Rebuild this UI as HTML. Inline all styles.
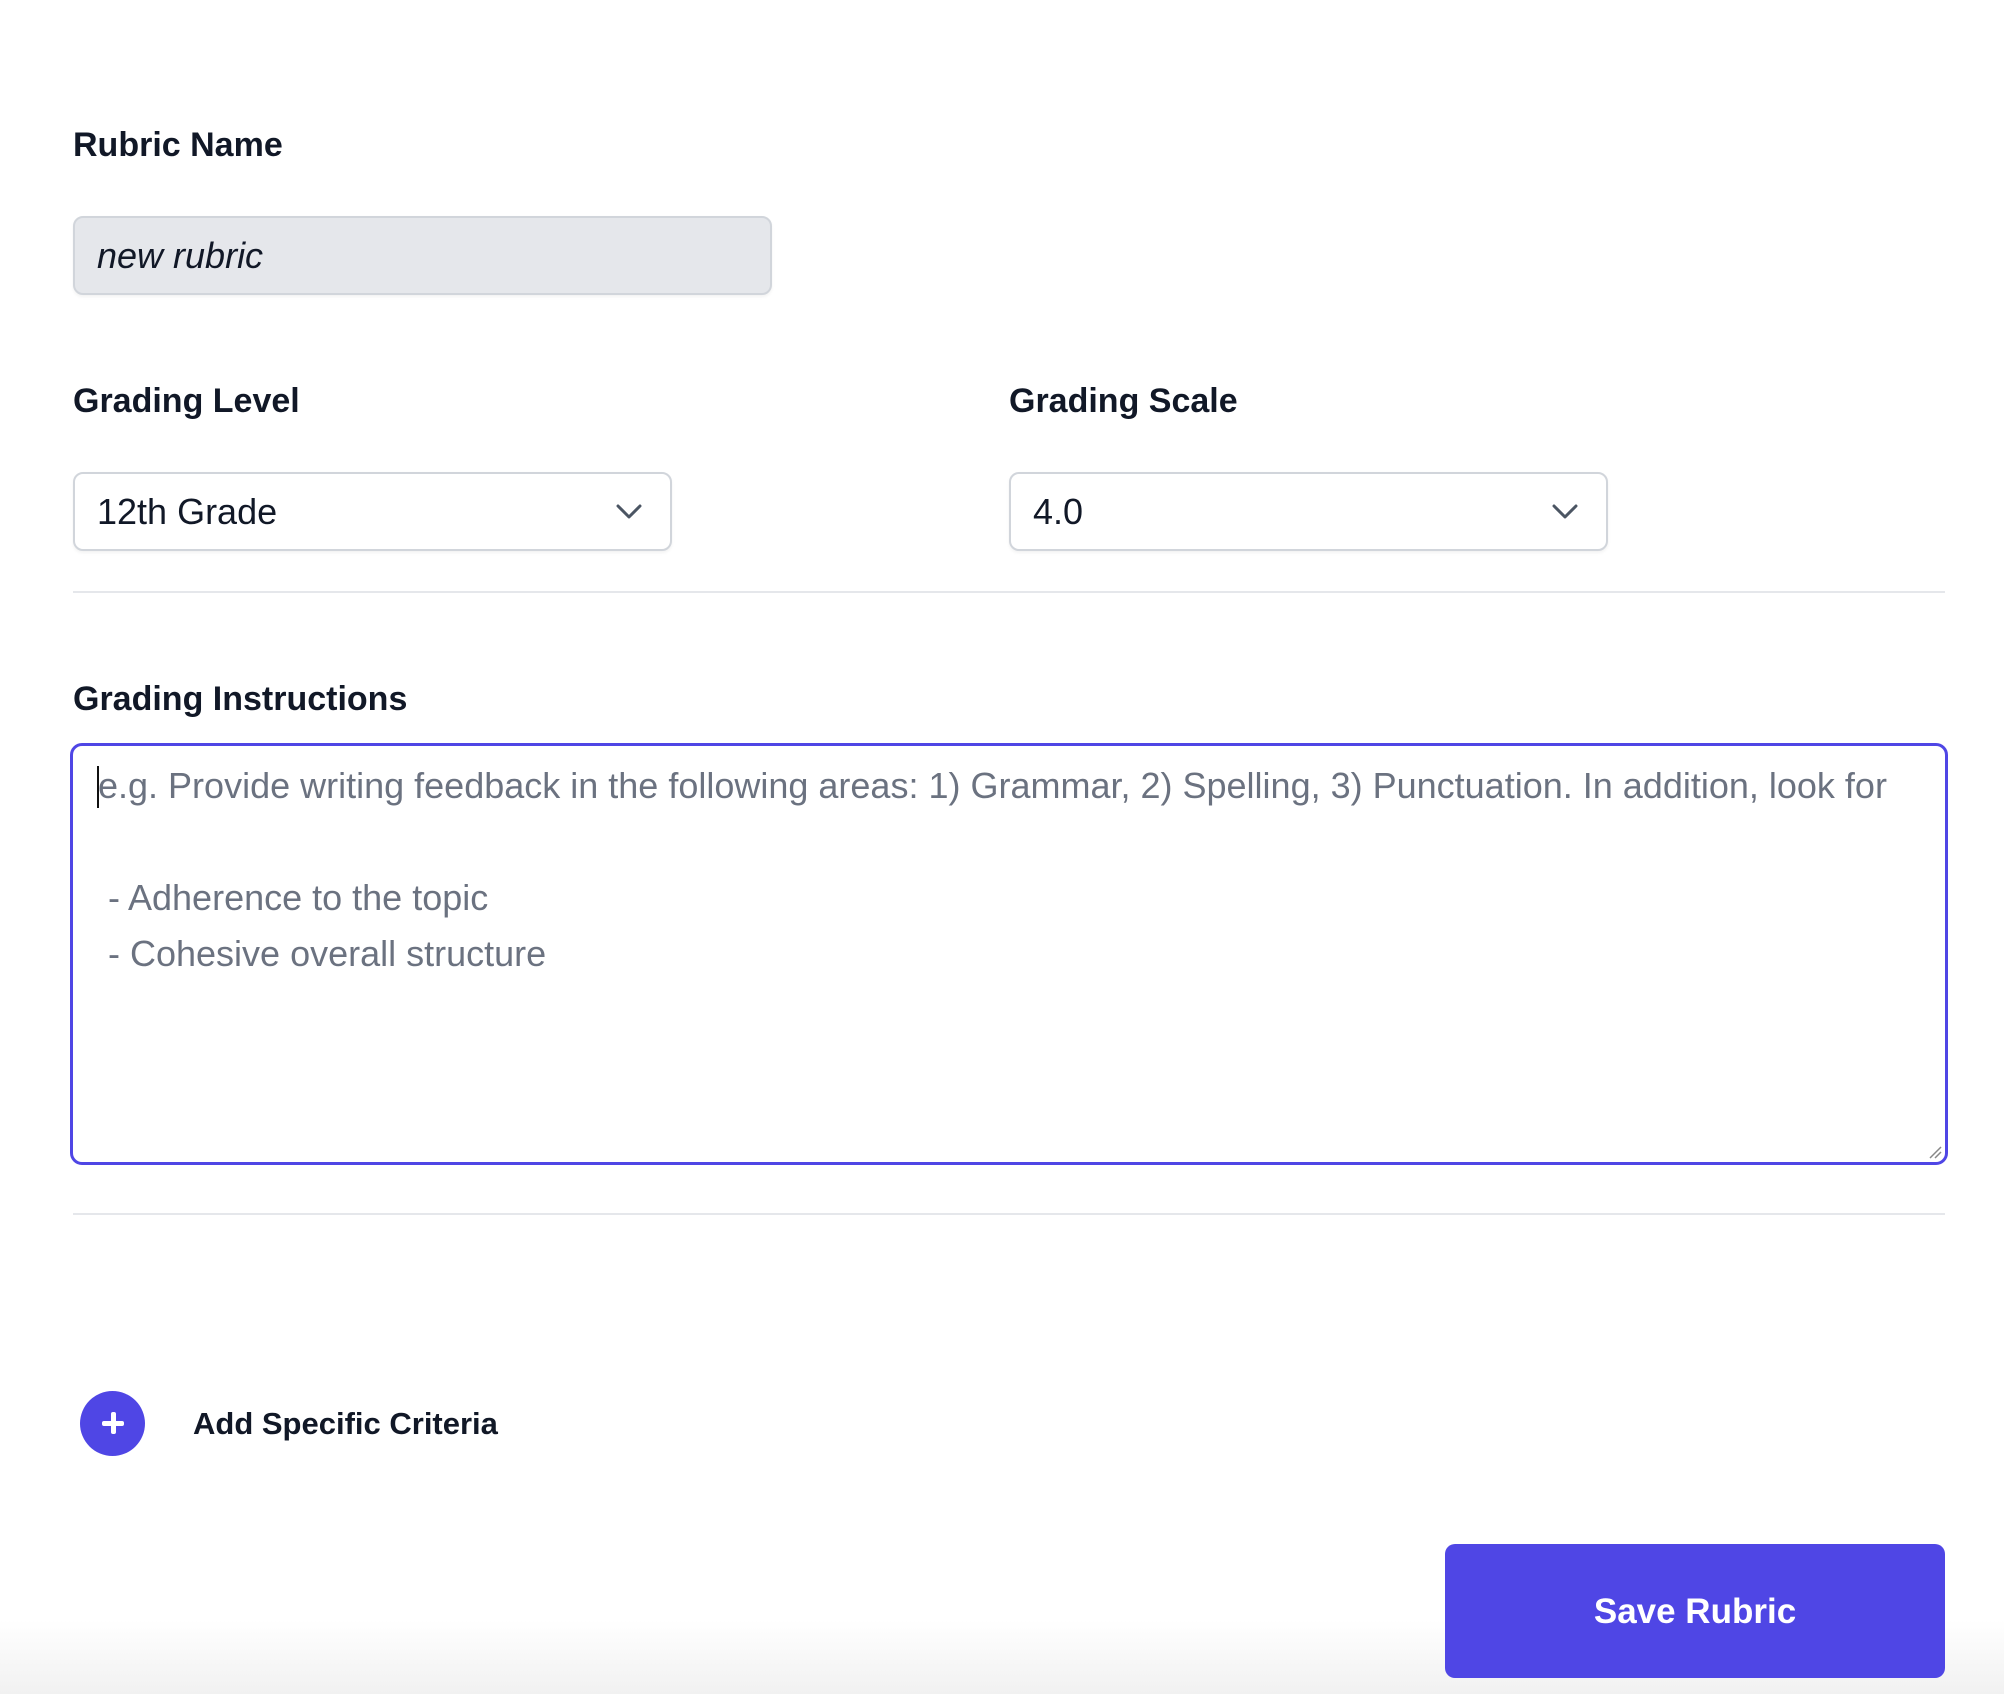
<!DOCTYPE html>
<html><head><meta charset="utf-8"><style>
*{box-sizing:border-box;margin:0;padding:0}
html,body{width:2004px;height:1694px;overflow:hidden}
body{background:linear-gradient(to bottom,#fff 0,#fff 1620px,#f1f1f1 1694px);font-family:"Liberation Sans",sans-serif;color:#111827;position:relative}
.lbl{position:absolute;left:73px;font-size:34px;font-weight:700;line-height:40px;transform:translateY(-50%)}
.box{position:absolute;border:2px solid #d1d5db;border-radius:10px;background:#fff;box-shadow:0 2px 3px rgba(0,0,0,.05)}
.val{position:absolute;left:22px;top:50%;transform:translateY(-50%);font-size:35px}
.chev{position:absolute;right:28px;top:50%;margin-top:-10px}
.hr{position:absolute;left:73px;width:1872px;height:2px;background:#e5e7eb}
</style></head><body>
<div class="lbl" style="top:145px">Rubric Name</div>
<div class="box" style="left:73px;top:216px;width:699px;height:79px;background:#e5e7eb"><div class="val" style="font-style:italic;font-size:36px">new rubric</div></div>

<div class="lbl" style="top:401px">Grading Level</div>
<div class="lbl" style="top:401px;left:1009px">Grading Scale</div>
<div class="box" style="left:73px;top:472px;width:599px;height:79px"><div class="val" style="font-size:36px">12th Grade</div>
<svg class="chev" width="26" height="18" viewBox="0 0 26 18"><path d="M2 4l11 11 11-11" fill="none" stroke="#4b5563" stroke-width="3" stroke-linecap="round" stroke-linejoin="round"/></svg></div>
<div class="box" style="left:1009px;top:472px;width:599px;height:79px"><div class="val" style="font-size:36px">4.0</div>
<svg class="chev" width="26" height="18" viewBox="0 0 26 18"><path d="M2 4l11 11 11-11" fill="none" stroke="#4b5563" stroke-width="3" stroke-linecap="round" stroke-linejoin="round"/></svg></div>
<div class="hr" style="top:591px"></div>

<div class="lbl" style="top:699px">Grading Instructions</div>
<div style="position:absolute;left:70px;top:743px;width:1878px;height:422px;border:3px solid #4f46e5;border-radius:12px;background:#fff">
<div style="position:absolute;left:25px;top:12px;font-size:36px;line-height:56px;color:#6b7280;white-space:pre">e.g. Provide writing feedback in the following areas: 1) Grammar, 2) Spelling, 3) Punctuation. In addition, look for

 - Adherence to the topic
 - Cohesive overall structure</div>
<div style="position:absolute;left:24px;top:20px;width:2px;height:42px;background:#111"></div>
<svg style="position:absolute;right:3px;bottom:3px" width="14" height="14"><path d="M2 13L13 2M7 13L13 7" stroke="#888" stroke-width="1.5"/></svg>
</div>
<div class="hr" style="top:1213px"></div>

<div style="position:absolute;left:80px;top:1391px;width:65px;height:65px;border-radius:50%;background:#4f46e5"></div>
<div style="position:absolute;left:102px;top:1421px;width:22px;height:5px;background:#fff;border-radius:2px"></div>
<div style="position:absolute;left:110.5px;top:1412px;width:5px;height:22px;background:#fff;border-radius:2px"></div>
<div style="position:absolute;left:193px;top:1424px;transform:translateY(-50%);font-size:31px;font-weight:700;line-height:40px">Add Specific Criteria</div>

<div style="position:absolute;left:1445px;top:1544px;width:500px;height:134px;background:#4f46e5;border-radius:10px;color:#fff;font-size:35px;font-weight:700;display:flex;align-items:center;justify-content:center;padding-top:2px">Save Rubric</div>
</body></html>
